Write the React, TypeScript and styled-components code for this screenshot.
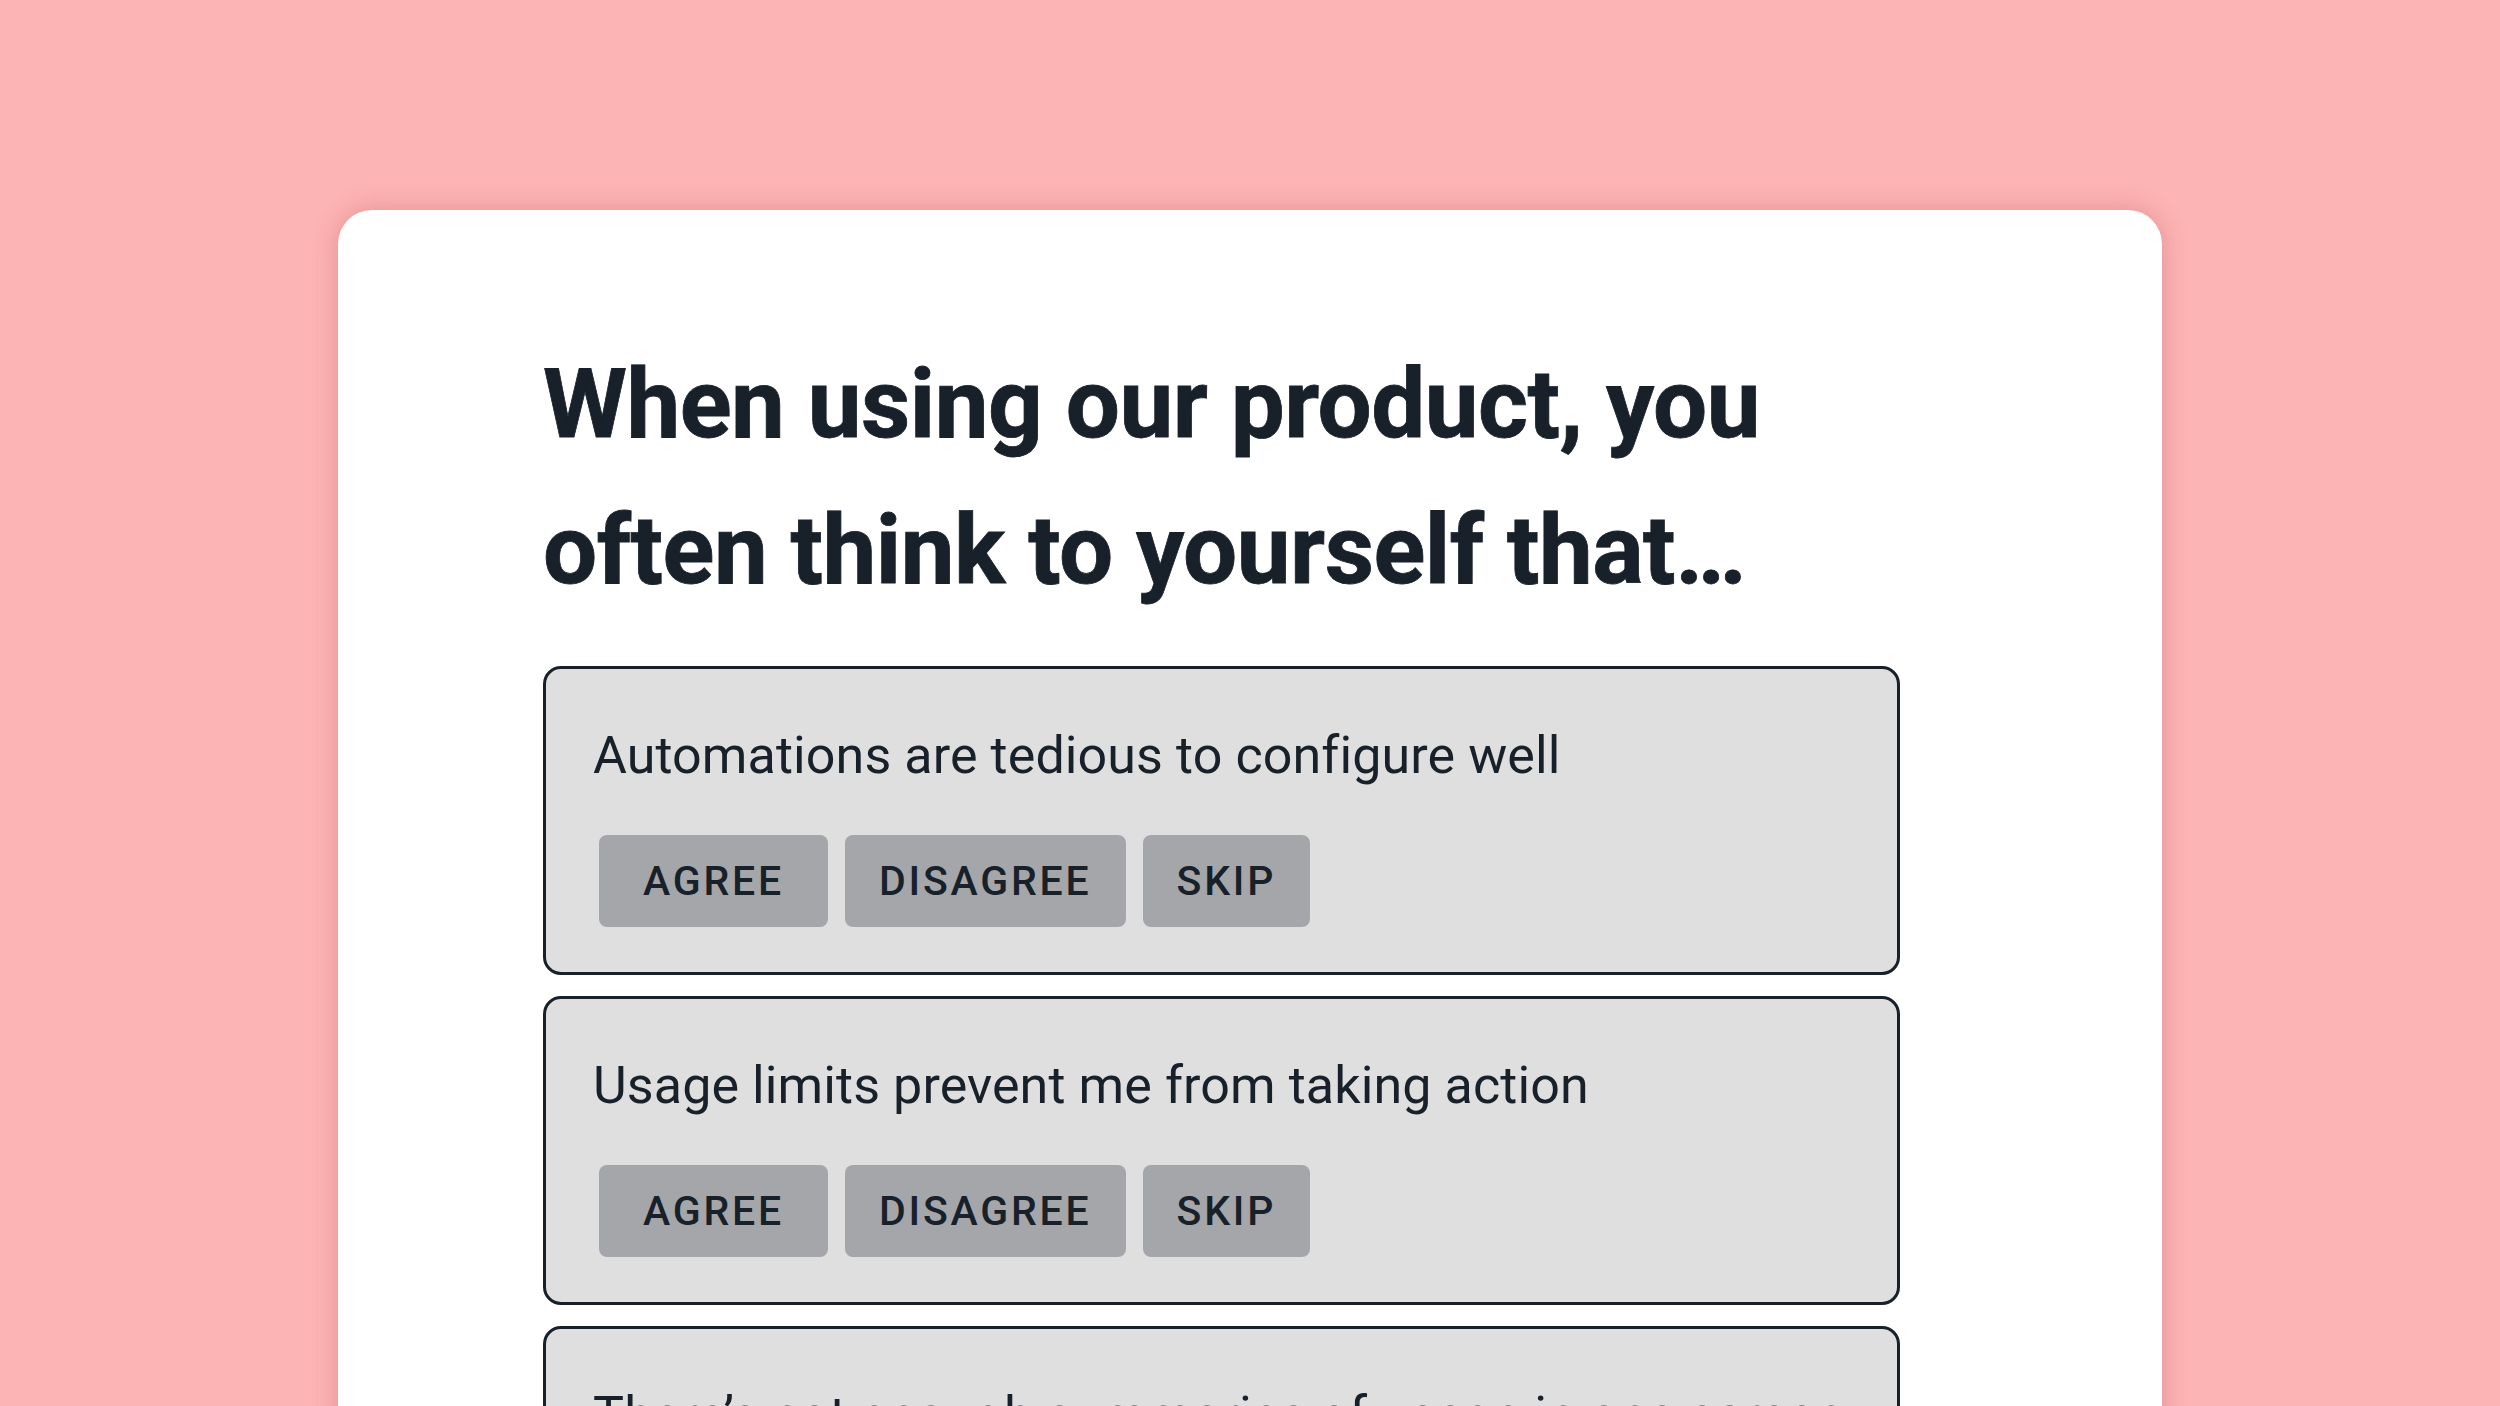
import styled, { createGlobalStyle } from "styled-components";

const statements = [
  "Automations are tedious to configure well",
  "Usage limits prevent me from taking action",
  "There’s not enough summaries of usage in one screen",
];

const answers = [
  { label: "AGREE", wide: true },
  { label: "DISAGREE", wide: false },
  { label: "SKIP", wide: false },
];

export default function App() {
  return (
    <>
      <GlobalStyle />
      <Page>
        <Card>
          <Content>
            <Title>When using our product, you often think to yourself that…</Title>
            <List>
              {statements.map((text) => (
                <Statement key={text}>
                  <StatementText>{text}</StatementText>
                  <ButtonRow>
                    {answers.map((a) => (
                      <AnswerButton key={a.label} $wide={a.wide}>
                        {a.label}
                      </AnswerButton>
                    ))}
                  </ButtonRow>
                </Statement>
              ))}
            </List>
          </Content>
        </Card>
      </Page>
    </>
  );
}

//styles
const GlobalStyle = createGlobalStyle`
  html, body {
    margin: 0;
    padding: 0;
    background: #fdb4b4;
    overflow: hidden;
  }
  * {
    box-sizing: border-box;
  }
`;

const Page = styled.div`
  width: 2500px;
  height: 1406px;
  overflow: hidden;
  padding-top: 210px;
  background: #fdb4b4;
  font-family: Roboto, "Liberation Sans", sans-serif;
  color: #18202a;
`;

const Card = styled.div`
  width: 1824px;
  min-height: 1400px;
  margin: 0 auto;
  background: #ffffff;
  border-radius: 34px;
  box-shadow: 0 0 26px rgba(160, 50, 60, 0.28);
`;

const Content = styled.div`
  width: 1562px;
  padding: 121px 0 0 205px;
`;

const Title = styled.h1`
  margin: 0 0 43px;
  font-size: 96px;
  font-weight: 700;
  line-height: 146px;
  letter-spacing: -0.5px;
  -webkit-text-stroke: 0.8px #18202a;
`;

const List = styled.div`
  display: flex;
  flex-direction: column;
  gap: 21px;
`;

const Statement = styled.div`
  display: flex;
  flex-direction: column;
  align-items: flex-start;
  padding: 57px 47px 45px 47px;
  background: #dfdfdf;
  border: 3px solid #18202a;
  border-radius: 18px;
`;

const StatementText = styled.div`
  font-size: 52px;
  font-weight: 400;
  line-height: 60px;
  letter-spacing: 0.1px;
  margin: 0 0 49px;
`;

const ButtonRow = styled.div`
  display: flex;
  gap: 17px;
  margin-left: 6px;
`;

const AnswerButton = styled.button<{ $wide: boolean }>`
  display: flex;
  align-items: center;
  justify-content: center;
  height: 92px;
  padding: ${(p) => (p.$wide ? "0 44px" : "0 34px")};
  border: none;
  border-radius: 8px;
  background: #a4a6aa;
  color: #18202a;
  font-family: Roboto, "Liberation Sans", sans-serif;
  font-size: 41px;
  font-weight: 500;
  letter-spacing: 2.8px;
`;
